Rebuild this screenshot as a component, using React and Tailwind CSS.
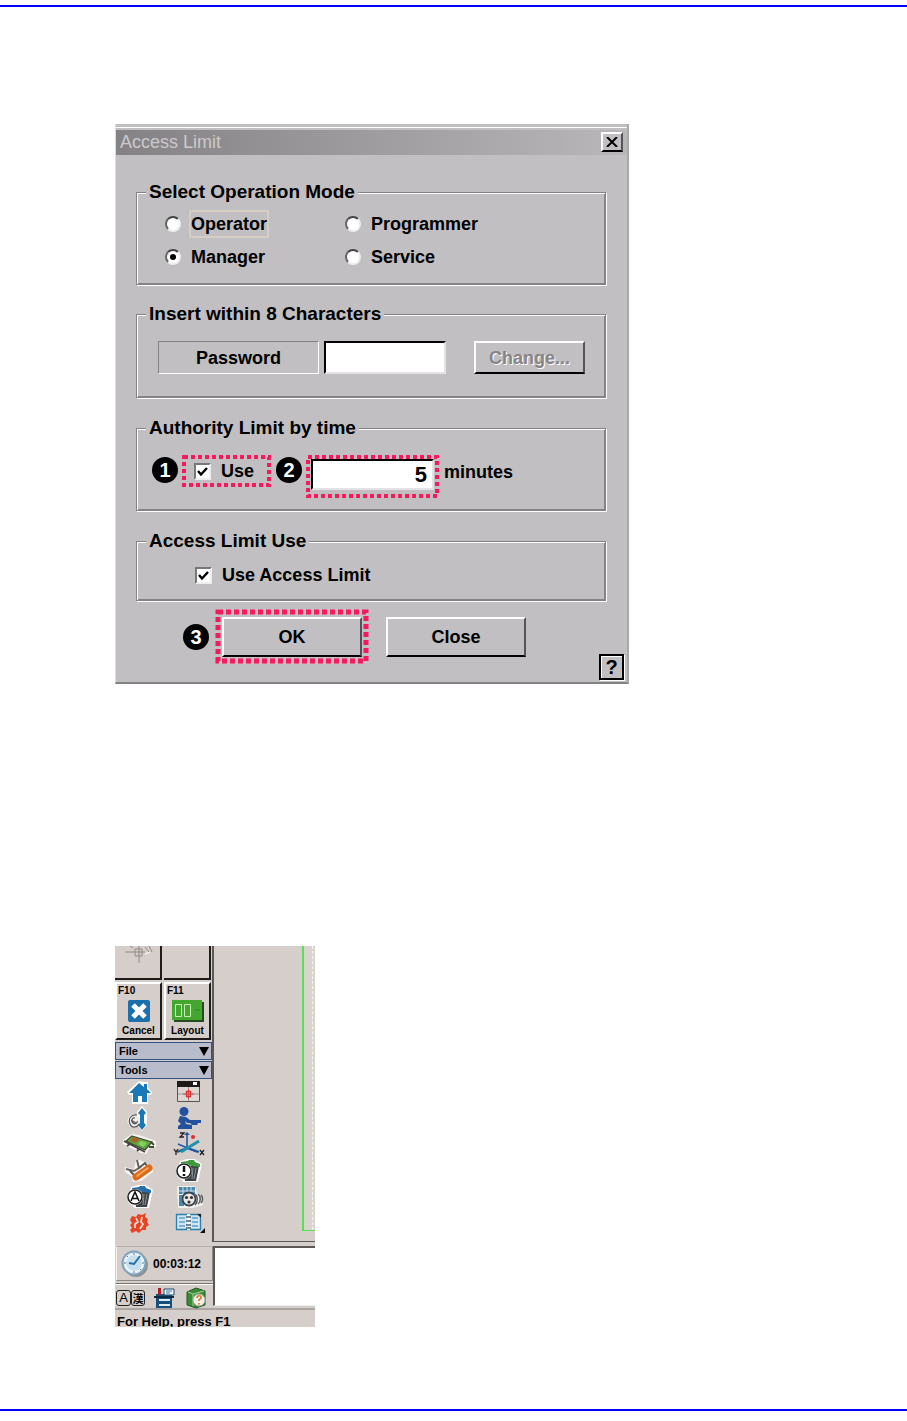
import React, { useState } from 'react';

const RAISED = 'border-2 border-t-white border-l-white border-r-[#55535a] border-b-black bg-[#c1bfc2]';
const SUNKEN = 'border-2 border-t-black border-l-black border-r-[#e4e2e4] border-b-[#e4e2e4] bg-white';

/* ---------- Dialog parts ---------- */

// Dotted highlight drawn over the control it wraps
const Marker = ({ thick = false }) => (
  <svg className="pointer-events-none absolute inset-0 h-full w-full overflow-visible" aria-hidden="true">
    <rect
      width="100%"
      height="100%"
      fill="none"
      stroke="#f5195d"
      strokeWidth={thick ? 5 : 4}
      strokeDasharray={thick ? '5 3' : '4 3'}
    />
  </svg>
);

const Step = ({ number }) => (
  <span className="flex h-[26px] w-[26px] shrink-0 items-center justify-center rounded-full bg-black text-[20px] leading-[26px] font-bold text-white">
    {number}
  </span>
);

const Group = ({ title, className = '', children }) => (
  <fieldset
    className={`border border-[#848284] shadow-[1px_1px_0_#fff,inset_1px_1px_0_#fff,inset_-1px_-1px_0_#848284] ${className}`}
  >
    <legend className="ml-[9px] bg-[#c1bfc2] px-[3px] text-[19px] leading-[22px]">{title}</legend>
    {children}
  </fieldset>
);

const Radio = ({ label, value, selected, onSelect, focused = false }) => (
  <label className="flex h-7 items-center gap-2">
    <input
      type="radio"
      name="mode"
      value={value}
      checked={selected === value}
      onChange={() => onSelect(value)}
      className="flex h-4 w-4 shrink-0 appearance-none items-center justify-center rounded-full border-2 border-t-[#444] border-r-[#eee] border-b-[#eee] border-l-[#666] bg-white checked:before:h-[6px] checked:before:w-[6px] checked:before:rounded-full checked:before:bg-black"
    />
    <span className={`flex h-7 items-center border-2 ${focused ? 'border-[#d6cdc4]' : 'border-transparent'}`}>
      {label}
    </span>
  </label>
);

const Checkbox = ({ label, checked, onChange }) => (
  <label className="flex items-center gap-[10px]">
    <span className="relative flex h-[17px] w-[17px]">
      <input
        type="checkbox"
        checked={checked}
        onChange={(e) => onChange(e.target.checked)}
        className="peer h-full w-full appearance-none border-2 border-t-[#777] border-r-[#eee] border-b-[#eee] border-l-[#777] bg-white"
      />
      <svg viewBox="0 0 17 17" className="pointer-events-none absolute inset-0 hidden peer-checked:block" aria-hidden="true">
        <path d="M4 8l3 3.5L13 5" fill="none" stroke="#000" strokeWidth="2.4" />
      </svg>
    </span>
    {label}
  </label>
);

const AccessDialog = () => {
  const [mode, setMode] = useState('manager');
  const [useTime, setUseTime] = useState(true);
  const [useLimit, setUseLimit] = useState(true);
  const [minutes, setMinutes] = useState('5');
  const [password, setPassword] = useState('');

  return (
    <section className="w-full max-w-[514px] border-r-2 border-b-2 border-l border-r-[#aaa8ab] border-b-[#848284] border-l-[#dddbdd] bg-[#c1bfc2] text-[18px] leading-[22px] font-bold text-black">
      <div className="h-[6px] border-t-[3px] border-b-2 border-t-[#c1bfc2] border-b-[#c1bfc2] bg-white" />
      <header className="flex h-[25px] items-center justify-between bg-linear-to-r from-[#848284] to-[#b9b7ba] pr-1 pb-[2px] pl-1">
        <h1 className="font-normal text-[#cbc9cc]">Access Limit</h1>
        <button type="button" aria-label="Close window" className={`flex h-5 w-[22px] items-center justify-center ${RAISED}`}>
          <svg viewBox="0 0 12 10" className="h-[10px] w-3" aria-hidden="true">
            <path d="M1 0l10 10M11 0L1 10" stroke="#000" strokeWidth="2" />
          </svg>
        </button>
      </header>

      <div className="flex flex-col pt-[26px] pr-[21px] pl-5">
        <Group title="Select Operation Mode" className="h-[104px]">
          <div className="grid grid-cols-[180px_1fr] gap-y-[5px] pt-[7px] pl-7">
            <Radio label="Operator" value="operator" selected={mode} onSelect={setMode} focused />
            <Radio label="Programmer" value="programmer" selected={mode} onSelect={setMode} />
            <Radio label="Manager" value="manager" selected={mode} onSelect={setMode} />
            <Radio label="Service" value="service" selected={mode} onSelect={setMode} />
          </div>
        </Group>

        <Group title="Insert within 8 Characters" className="mt-[18px] h-[95px]">
          <div className="flex pt-4 pl-[21px]">
            <label
              htmlFor="password"
              className="flex h-[33px] w-[161px] items-center justify-center border border-t-[#848284] border-r-white border-b-white border-l-[#848284]"
            >
              Password
            </label>
            <input
              id="password"
              type="password"
              maxLength={8}
              value={password}
              onChange={(e) => setPassword(e.target.value)}
              className={`ml-[5px] h-[33px] w-[122px] px-1 outline-none ${SUNKEN}`}
            />
            <button
              type="button"
              disabled
              className={`ml-7 h-[33px] w-[111px] text-[#868487] [text-shadow:1px_1px_0_#fff] ${RAISED}`}
            >
              Change...
            </button>
          </div>
        </Group>

        <Group title="Authority Limit by time" className="mt-[19px] h-[94px]">
          <div className="flex items-start pt-[18px] pl-[15px]">
            <Step number={1} />
            <div className="relative ml-[6px] flex h-7 w-[85px] items-center pl-[10px]">
              <Checkbox label="Use" checked={useTime} onChange={setUseTime} />
              <Marker />
            </div>
            <div className="ml-[7px]">
              <Step number={2} />
            </div>
            <div className="relative ml-[6px] h-[39px] w-[129px] px-[3px] pt-[2px]">
              <input
                id="minutes"
                type="text"
                value={minutes}
                onChange={(e) => setMinutes(e.target.value)}
                className={`h-[31px] w-full pr-[5px] text-right text-[22px] font-bold outline-none ${SUNKEN}`}
              />
              <Marker />
            </div>
            <label htmlFor="minutes" className="ml-[7px] pt-1">
              minutes
            </label>
          </div>
        </Group>

        <Group title="Access Limit Use" className="mt-[19px] h-[71px]">
          <div className="flex pt-3 pl-[58px]">
            <Checkbox label="Use Access Limit" checked={useLimit} onChange={setUseLimit} />
          </div>
        </Group>

        <div className="flex items-center pt-[11px] pl-[47px]">
          <Step number={3} />
          <div className="relative ml-[9px] flex h-[49px] items-center px-1">
            <button type="button" className={`h-10 w-[140px] ${RAISED}`}>
              OK
            </button>
            <Marker thick />
          </div>
          <button type="button" className={`ml-5 h-10 w-[140px] ${RAISED}`}>
            Close
          </button>
        </div>
      </div>

      <div className="flex justify-end pr-[3px] pb-[2px]">
        <button
          type="button"
          aria-label="Help"
          className="-mt-[7px] h-[26px] w-[25px] border-2 border-black bg-[#c1bfc2] text-[20px] leading-[20px] shadow-[1px_1px_0_#fff,inset_1px_1px_0_#fff]"
        >
          ?
        </button>
      </div>
    </section>
  );
};

/* ---------- Toolbar icons ---------- */

const ToolIcon = ({ label, children }) => (
  <button type="button" aria-label={label} className="flex h-[26px] items-center justify-center">
    <svg viewBox="0 0 34 26" className="h-[26px] w-[34px]" fill="none" aria-hidden="true">
      {children}
    </svg>
  </button>
);

const Bin = ({ lid, children }) => (
  <>
    <path d="M9 3l7-2h8l7 5-1 4-3 14H13L6 18z" fill="#fff" />
    <path d="M12 8h16l-3 15H14z" fill="#3d4246" />
    <path d="M22 10l-1 11M25 10l-2 11" stroke="#8b969c" />
    <path d="M10 4l7-1 1-1h5l1 2 5 2v3L10 7z" fill={lid} />
    <circle cx="13" cy="13" r="8" fill="#fff" />
    <circle cx="13" cy="13" r="7" fill="#fff" stroke="#222" strokeWidth="1.600" />
    {children}
  </>
);

const TOOLS = [
  {
    label: 'Home',
    art: (
      <>
        <path d="M17 1L5 12l2 3h3v9h16v-9h3l1-3-4-4V2h-5z" fill="#fff" />
        <path d="M17 3L7 13h4v9h5v-6h4v6h5v-9h4l-4-4V4h-3v3z" fill="#1b78b6" />
      </>
    ),
  },
  {
    label: 'Window',
    art: (
      <>
        <path d="M6.500 1.500h22v20h-22z" fill="#dcd7d3" stroke="#555" />
        <path d="M6 1h23v6H6z" fill="#1d1a1a" />
        <path d="M22 2h4v3h-4z" fill="#fff" />
        <path d="M7 14h21M17.500 7v14" stroke="#9a9693" />
        <path d="M12 14h11M17.500 9v10" stroke="#dc4545" />
        <path d="M15.500 11.500h4v5h-4z" stroke="#d22f2f" strokeWidth="1.300" />
      </>
    ),
  },
  {
    label: 'Rotate',
    art: (
      <>
        <path d="M20 0l-5 6v13l5 6 5-6V6z" fill="#fff" />
        <circle cx="12" cy="15" r="6.500" fill="#efedeb" />
        <path d="M15 9c-6-1-9 4-7 9s8 3 9 0M13 12c-3-1-4 3-2 5s5 0 4-2M9 14l5 3" stroke="#555" strokeWidth="1.200" />
        <path d="M20 2l4 5-2 2v8l2 2-4 5-4-5 2-2V9l-2-2z" fill="#1b78b6" />
      </>
    ),
  },
  {
    label: 'Operator position',
    art: (
      <>
        <circle cx="13" cy="5.500" r="4.500" fill="#2450a0" />
        <path d="M9 10l6 1 4 3h11v3h-3l-1 2h-5l-2-2h-3l-2-2 1 3 6 1v4H7v-3l3-2-3-3z" fill="#2450a0" />
      </>
    ),
  },
  {
    label: 'Board',
    art: (
      <>
        <path d="M1 8l9-6 7 1 17 6v6l-7 2-3 5-5-1L1 12z" fill="#f6f4f2" />
        <path d="M10 4l20 6-7 8L4 9z" fill="#5cab3f" stroke="#3c4634" strokeWidth="1.200" />
        <path d="M11 5l7 2-4 4-6-2z" fill="#a8642a" />
        <path d="M19 9l6 2-4 4-5-3z" fill="#8ccc62" />
        <path d="M2 9l21 11M29 10l3 3M8 12l-3 2M17 17l-2 2M27 15h5" stroke="#47443b" strokeWidth="1.800" />
      </>
    ),
  },
  {
    label: 'Axes',
    art: (
      <>
        <path d="M16 2v15" stroke="#2654a8" strokeWidth="1.600" />
        <path d="M6 20l10-4 12 4" stroke="#1b5f98" strokeWidth="2.200" />
        <path d="M7 12l19 8" stroke="#2654a8" strokeWidth="1.500" />
        <path d="M10 20L28 9" stroke="#1e93ad" strokeWidth="3" />
        <path d="M13 3l3-3 3 3z" fill="#2654a8" />
        <circle cx="22" cy="5" r="2" fill="#e02b35" />
        <path d="M9 1h4l-4 4h4M3 17l2 3 2-3M5 20v3M29 18l4 5M33 18l-4 5" stroke="#24201f" strokeWidth="1.300" />
      </>
    ),
  },
  {
    label: 'Knife',
    art: (
      <>
        <path d="M3 9l9 2 2-9h4l12 6 1 6-12 9-8 1-2-6-6-4z" fill="#f6f4f2" />
        <path d="M4 11l8 2 5-3-2-8" stroke="#666360" strokeWidth="2" />
        <path d="M17 10l6-5 2 3M8 13l4 4" stroke="#55534f" strokeWidth="1.800" />
        <path d="M14 19L27 10" stroke="#dc6a1a" strokeWidth="7" strokeLinecap="round" />
        <path d="M15 18L26 10" stroke="#f4a560" strokeWidth="2" strokeLinecap="round" />
      </>
    ),
  },
  {
    label: 'Delete all',
    art: (
      <Bin lid="#3c9b3a">
        <path d="M13 8v6M13 16v2" stroke="#111" strokeWidth="2.500" />
      </Bin>
    ),
  },
  {
    label: 'Auto delete',
    art: (
      <Bin lid="#266fa8">
        <path d="M9 17l4-9 4 9M10.500 14.500h5" stroke="#111" strokeWidth="1.600" />
      </Bin>
    ),
  },
  {
    label: 'Feeder',
    art: (
      <>
        <path d="M6 2h18l2 7 6 4v8l-10 3H7z" fill="#f1f0ef" />
        <path d="M8 3h16v7H8zM8 11h5v11H8z" fill="#4689ad" />
        <path d="M12 3v8M16 3v8M20 3v8M8 7h16" stroke="#cadde8" />
        <path d="M24 10c3 2 3 8 0 11M27 10c3 2 3 8 0 10M30 11c2 2 2 6 0 8" stroke="#50585c" strokeWidth="1.500" />
        <circle cx="18" cy="15" r="6.500" fill="#e6e8e8" stroke="#3b4347" strokeWidth="1.800" />
        <circle cx="15.500" cy="13.500" r="1.600" fill="#333" />
        <circle cx="20.500" cy="13.500" r="1.600" fill="#333" />
        <circle cx="18" cy="18" r="1.600" fill="#333" />
      </>
    ),
  },
  {
    label: 'Reset',
    art: (
      <>
        <path
          d="M10 6l4 1 2-3 4 1 4-2-1 4 3 2-1 3 2 3-3 2 0 3-4 0-3 3-3-2-4 2-2-3 2-2-2-3 2-2-2-3z"
          fill="#e64525"
        />
        <path d="M14 8l2 4-3 2v4M20 7l-1 5 2 2-3 5" stroke="#fae6df" strokeWidth="1.600" />
      </>
    ),
  },
  {
    label: 'Book',
    art: (
      <>
        <path d="M5.500 4.500h24v15h-24z" fill="#cfe6f3" stroke="#2c7fae" strokeWidth="1.300" />
        <path d="M8 8h6M8 12h6M8 16h6M21 8h6M21 12h6M21 16h6" stroke="#5f9fc5" strokeWidth="1.300" />
        <path d="M17.500 4v16" stroke="#fff" strokeWidth="3" />
        <path d="M15 7h5M15 11h5M15 15h5M15 18h5" stroke="#455f6c" strokeWidth="1.300" />
        <path d="M26 4h4v4z" fill="#222" />
        <path d="M34 18v5h-5z" fill="#111" />
      </>
    ),
  },
];

const KeyButton = ({ hotkey, label, children }) => (
  <button
    type="button"
    className="flex h-[58px] w-[47px] flex-col items-center border-t-2 border-r-2 border-b-2 border-l-2 border-t-white border-r-[#1e1c1b] border-b-[#1e1c1b] border-l-white bg-[#d5cecb] pt-px text-[10px] leading-3 font-bold"
  >
    <span className="self-start pl-px">{hotkey}</span>
    <span className="flex h-7 items-center">{children}</span>
    <span>{label}</span>
  </button>
);

const MenuBar = ({ label }) => (
  <button
    type="button"
    className="flex h-[18px] w-full items-center justify-between border border-[#34527f] bg-[#b9bccb] pr-[2px] pl-[3px] text-[11px] leading-4 font-bold"
  >
    {label}
    <svg viewBox="0 0 10 9" className="h-[9px] w-[10px]" aria-hidden="true">
      <path d="M0 0h10L5 9z" fill="#000" />
    </svg>
  </button>
);

const MachinePanel = () => (
  <section className="w-full max-w-[200px] overflow-hidden bg-[#d5cecb] text-black">
    <div className="flex h-[296px]">
      <div className="w-[99px] shrink-0 border-r-2 border-[#5b5756]">
        <div className="flex gap-[2px]">
          <div className="flex h-[34px] w-[47px] justify-center border-r-2 border-b-2 border-[#1e1c1b]">
            <svg viewBox="0 0 34 18" className="h-[18px] w-[34px]" fill="none" stroke="#8f8b89" aria-hidden="true">
              <path d="M4 6h20M18 0v17M14 3h7v7h-7zM24 1l4 5M28 0l3 6M9 0l3 2" />
              <path d="M24 8l5-2" stroke="#fff" />
            </svg>
          </div>
          <div className="h-[34px] w-[47px] border-r-2 border-b-2 border-[#1e1c1b]" />
        </div>
        <div className="flex gap-[2px] pt-[2px]">
          <KeyButton hotkey="F10" label="Cancel">
            <svg viewBox="0 0 22 22" className="h-[22px] w-[22px]" aria-hidden="true">
              <rect width="22" height="22" rx="2" fill="#1c6fab" />
              <path d="M5 5l12 12M17 5L5 17" stroke="#fff" strokeWidth="5" />
            </svg>
          </KeyButton>
          <KeyButton hotkey="F11" label="Layout">
            <svg viewBox="0 0 32 22" className="h-[22px] w-8" fill="none" aria-hidden="true">
              <path d="M2 2h30v20H2z" fill="#274b20" />
              <path d="M0 0h30v20H0z" fill="#43a62e" />
              <path d="M3.500 4.500h6v12h-6zM12.500 4.500h6v12h-6z" stroke="#c9ecb6" />
              <path d="M23 10h5" stroke="#2f8125" />
            </svg>
          </KeyButton>
        </div>
        <div className="flex flex-col gap-px pt-[2px]">
          <MenuBar label="File" />
          <MenuBar label="Tools" />
        </div>
        <div className="grid grid-cols-2 pt-px">
          {TOOLS.map((tool) => (
            <ToolIcon key={tool.label} label={tool.label}>
              {tool.art}
            </ToolIcon>
          ))}
        </div>
      </div>

      {/* Work area with the board outline running off the right edge */}
      <div className="flex flex-1 flex-col border-b border-[#5b5756]">
        <div className="ml-[88px] h-[285px] border-b border-l-2 border-[#55e058] bg-[#d9d4ce]">
          <div className="ml-2 h-full border-l border-dashed border-[#f4f2ee]" />
        </div>
      </div>
    </div>

    <div className="flex h-[66px] pt-1">
      <div className="w-[98px] shrink-0 pl-px">
        <div className="flex h-[35px] items-center gap-1 border border-t-[#b4afac] border-r-[#8b8785] border-b-[#8b8785] border-l-[#f3f0ee] pl-1">
          <svg viewBox="0 0 28 28" className="h-7 w-7" fill="none" aria-hidden="true">
            <circle cx="15" cy="15" r="12" fill="#8e9194" />
            <circle cx="13" cy="13" r="11.500" fill="#e5edf2" stroke="#7fa3bd" strokeWidth="2" />
            <circle cx="13" cy="13" r="8.500" fill="#c4dfed" stroke="#fff" />
            <path d="M19 6l-6 8-5-1" stroke="#276eaa" strokeWidth="2" />
            <path d="M13 3v2M13 21v2M3 13h2M21 13h2M6 6l1 1M19 19l1 1" stroke="#59788d" />
          </svg>
          <time className="text-[12px] leading-4 font-bold">00:03:12</time>
        </div>
        <div className="mt-[2px] border-b border-[#77736f] shadow-[0_1px_0_#fff]" />
        <div className="flex h-[24px] items-center justify-between pt-1 pr-[6px]">
          <button type="button" aria-label="Language" className="flex">
            <span className="flex h-4 w-[15px] items-center justify-center rounded-[3px] border border-[#222] text-[13px] leading-[14px]">
              A
            </span>
            <span className="flex h-4 w-[14px] items-center justify-center rounded-[3px] border border-[#222] font-['Noto_Sans_CJK_JP',sans-serif] text-[11px] leading-3 font-bold">
              漢
            </span>
          </button>
          <button type="button" aria-label="Save">
            <svg viewBox="0 0 22 22" className="h-[22px] w-[22px]" aria-hidden="true">
              <path d="M2 7h16v14H2z" fill="#164f7b" />
              <path d="M4 1h3v7H4z" fill="#a7202b" />
              <path d="M10 2h10v6H10z" fill="#f1f3f5" stroke="#1d4b70" />
              <path d="M12 4h6M12 6h4" stroke="#3a7aa8" />
              <path d="M5 12h11v2H5zM5 17h11v2H5z" fill="#dfeaf1" />
              <path d="M0 9h20v2H0z" fill="#0e2a42" />
            </svg>
          </button>
          <button type="button" aria-label="Manual">
            <svg viewBox="0 0 22 22" className="h-[22px] w-[22px]" fill="none" aria-hidden="true">
              <path d="M2 5l9-4 9 3v14l-9 3-9-3z" fill="#398b36" stroke="#235824" />
              <path d="M3 5l5 2v12M8 7l11-3" stroke="#a9cf98" />
              <circle cx="14" cy="13" r="6" fill="#f3f0e9" stroke="#a6aa9c" />
              <path d="M12 11c0-3 5-3 4 0l-2 2v1M14 16v1.500" stroke="#d8792c" strokeWidth="1.700" />
            </svg>
          </button>
        </div>
      </div>
      <div className="h-[60px] flex-1 border-t-2 border-b border-l-2 border-t-[#5b5756] border-b-[#eee] border-l-[#5b5756] bg-white" />
    </div>

    <footer className="h-[19px] overflow-hidden border-t-2 border-[#aaa5a2] pl-[2px] text-[13px] leading-[24px] font-bold whitespace-nowrap">
      <p>For Help, press F1</p>
    </footer>
  </section>
);

export default function App() {
  return (
    <div className="bg-white pt-[5px] pb-[10px] font-['Liberation_Sans',Arial,sans-serif]">
      <hr className="border-t-2 border-[#0000ff]" />
      <main className="flex flex-col gap-[262px] pt-[117px] pr-4 pb-[82px] pl-[115px]">
        <AccessDialog />
        <MachinePanel />
      </main>
      <hr className="border-t-2 border-[#0000ff]" />
    </div>
  );
}
